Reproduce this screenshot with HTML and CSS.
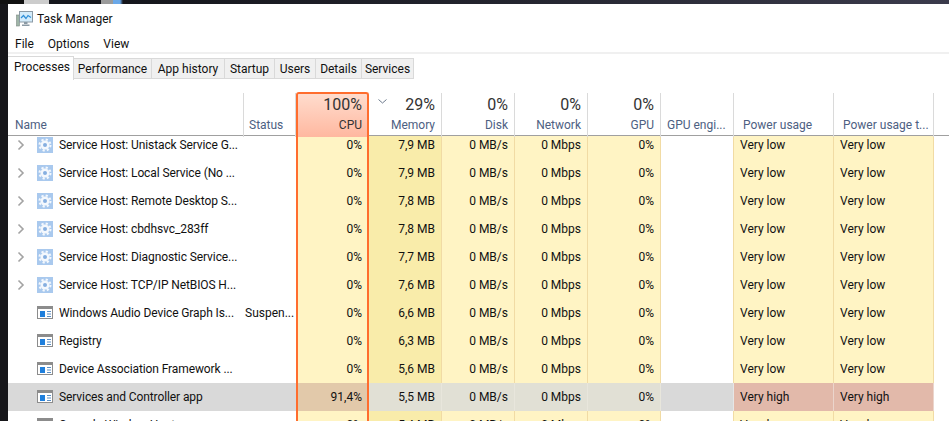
FILE: index.html
```html
<!DOCTYPE html>
<html lang="en">
<head>
    <meta charset="UTF-8">
    <title>Task Manager</title>
    <link rel="stylesheet" href="styles.css">
</head>
<body>
    <svg class="defs" width="0" height="0">
        <symbol id="gear" viewBox="0 0 16 16">
            <rect width="16" height="16" fill="#a9c9ee"/>
            <circle cx="8" cy="8" r="4.500" fill="#f4f8fd"/>
            <circle cx="8" cy="8" r="5.500" fill="none" stroke="#f4f8fd" stroke-width="2" stroke-dasharray="2.200 2.120"/>
            <circle cx="8" cy="8" r="2" fill="#86afe0"/>
        </symbol>
        <symbol id="app" viewBox="0 0 16 16">
            <rect x=".5" y="1.500" width="15" height="12" fill="#fff" stroke="#8c8c8c"/>
            <rect x="1" y="2" width="14" height="2" fill="#8c8c8c"/>
            <rect x="3" y="6" width="5" height="6" fill="#1f7fdc"/>
            <path stroke="#5c8fc4" d="M10 6.500h4M10 9h4M10 11.500h4"/>
        </symbol>
        <symbol id="chev" viewBox="0 0 8 12">
            <path fill="none" stroke="#a3a3a3" stroke-width="1.600" d="M1.500 1.500 6 6l-4.500 4.500"/>
        </symbol>
    </svg>

    <div class="window">
        <div class="titlebar">
            <svg class="app-icon" width="17" height="16" viewBox="0 0 17 16">
                <rect x=".5" y="4" width="3" height="11" fill="#9fb5a8" stroke="#7d8b84" stroke-width=".6"/>
                <rect x="3.500" y=".5" width="13" height="10.500" fill="#d4ecfb" stroke="#8b9aa5"/>
                <path fill="none" stroke="#2f8fd8" stroke-width="1.200" d="M5 7l2.500-2.500L10 7.500l2-3 3 2"/>
                <path fill="#8b9aa5" d="M8 11h3.500v2H8zM6 13.500h7.500V15H6z"/>
            </svg>
            <span>Task Manager</span>
        </div>
        <div class="menubar">
            <span>File</span>
            <span>Options</span>
            <span>View</span>
        </div>
        <div class="tabs">
            <div class="tab tab-active">Processes</div>
            <div class="tab tab-perf">Performance</div>
            <div class="tab tab-hist">App history</div>
            <div class="tab tab-start">Startup</div>
            <div class="tab tab-users">Users</div>
            <div class="tab tab-details">Details</div>
            <div class="tab tab-services">Services</div>
        </div>

        <div class="table">
            <div class="head">
                <div class="hcol hcol-left"><span class="label name-label">Name</span></div>
                <div class="hcol hcol-left hcol-status"><span class="label">Status</span></div>
                <div class="hcol hcol-cpu"><span class="big">100%</span><span class="label">CPU</span></div>
                <div class="hcol hcol-mem">
                    <svg class="sort" width="9" height="5" viewBox="0 0 9 5"><path fill="none" stroke="#6d7a8c" d="M.5.5l4 3.500 4-3.500"/></svg>
                    <span class="big">29%</span><span class="label">Memory</span>
                </div>
                <div class="hcol"><span class="big">0%</span><span class="label">Disk</span></div>
                <div class="hcol"><span class="big">0%</span><span class="label">Network</span></div>
                <div class="hcol"><span class="big">0%</span><span class="label">GPU</span></div>
                <div class="hcol hcol-left"><span class="label">GPU engi...</span></div>
                <div class="hcol hcol-power"><span class="label">Power usage</span></div>
                <div class="hcol hcol-power"><span class="label">Power usage t...</span></div>
                <div class="hcol-end"></div>
            </div>

            <div class="rows">
                <div class="row">
                    <div class="c-name"><svg class="chev"><use href="#chev"/></svg><svg class="ico"><use href="#gear"/></svg>Service Host: Unistack Service G...</div>
                    <div class="c-status"></div><div class="c-cpu">0%</div><div class="c-mem">7,9 MB</div><div class="c-num">0 MB/s</div><div class="c-num">0 Mbps</div><div class="c-num">0%</div><div class="c-eng"></div><div class="c-pow">Very low</div><div class="c-pow">Very low</div>
                </div>
                <div class="row">
                    <div class="c-name"><svg class="chev"><use href="#chev"/></svg><svg class="ico"><use href="#gear"/></svg>Service Host: Local Service (No ...</div>
                    <div class="c-status"></div><div class="c-cpu">0%</div><div class="c-mem">7,9 MB</div><div class="c-num">0 MB/s</div><div class="c-num">0 Mbps</div><div class="c-num">0%</div><div class="c-eng"></div><div class="c-pow">Very low</div><div class="c-pow">Very low</div>
                </div>
                <div class="row">
                    <div class="c-name"><svg class="chev"><use href="#chev"/></svg><svg class="ico"><use href="#gear"/></svg>Service Host: Remote Desktop S...</div>
                    <div class="c-status"></div><div class="c-cpu">0%</div><div class="c-mem">7,8 MB</div><div class="c-num">0 MB/s</div><div class="c-num">0 Mbps</div><div class="c-num">0%</div><div class="c-eng"></div><div class="c-pow">Very low</div><div class="c-pow">Very low</div>
                </div>
                <div class="row">
                    <div class="c-name"><svg class="chev"><use href="#chev"/></svg><svg class="ico"><use href="#gear"/></svg>Service Host: cbdhsvc_283ff</div>
                    <div class="c-status"></div><div class="c-cpu">0%</div><div class="c-mem">7,8 MB</div><div class="c-num">0 MB/s</div><div class="c-num">0 Mbps</div><div class="c-num">0%</div><div class="c-eng"></div><div class="c-pow">Very low</div><div class="c-pow">Very low</div>
                </div>
                <div class="row">
                    <div class="c-name"><svg class="chev"><use href="#chev"/></svg><svg class="ico"><use href="#gear"/></svg>Service Host: Diagnostic Service...</div>
                    <div class="c-status"></div><div class="c-cpu">0%</div><div class="c-mem">7,7 MB</div><div class="c-num">0 MB/s</div><div class="c-num">0 Mbps</div><div class="c-num">0%</div><div class="c-eng"></div><div class="c-pow">Very low</div><div class="c-pow">Very low</div>
                </div>
                <div class="row">
                    <div class="c-name"><svg class="chev"><use href="#chev"/></svg><svg class="ico"><use href="#gear"/></svg>Service Host: TCP/IP NetBIOS H...</div>
                    <div class="c-status"></div><div class="c-cpu">0%</div><div class="c-mem">7,6 MB</div><div class="c-num">0 MB/s</div><div class="c-num">0 Mbps</div><div class="c-num">0%</div><div class="c-eng"></div><div class="c-pow">Very low</div><div class="c-pow">Very low</div>
                </div>
                <div class="row">
                    <div class="c-name c-leaf"><svg class="ico"><use href="#app"/></svg>Windows Audio Device Graph Is...</div>
                    <div class="c-status">Suspen...</div><div class="c-cpu">0%</div><div class="c-mem">6,6 MB</div><div class="c-num">0 MB/s</div><div class="c-num">0 Mbps</div><div class="c-num">0%</div><div class="c-eng"></div><div class="c-pow">Very low</div><div class="c-pow">Very low</div>
                </div>
                <div class="row">
                    <div class="c-name c-leaf"><svg class="ico"><use href="#app"/></svg>Registry</div>
                    <div class="c-status"></div><div class="c-cpu">0%</div><div class="c-mem">6,3 MB</div><div class="c-num">0 MB/s</div><div class="c-num">0 Mbps</div><div class="c-num">0%</div><div class="c-eng"></div><div class="c-pow">Very low</div><div class="c-pow">Very low</div>
                </div>
                <div class="row">
                    <div class="c-name c-leaf"><svg class="ico"><use href="#app"/></svg>Device Association Framework ...</div>
                    <div class="c-status"></div><div class="c-cpu">0%</div><div class="c-mem">5,6 MB</div><div class="c-num">0 MB/s</div><div class="c-num">0 Mbps</div><div class="c-num">0%</div><div class="c-eng"></div><div class="c-pow">Very low</div><div class="c-pow">Very low</div>
                </div>
                <div class="row row-selected">
                    <div class="c-name c-leaf"><svg class="ico"><use href="#app"/></svg>Services and Controller app</div>
                    <div class="c-status"></div><div class="c-cpu">91,4%</div><div class="c-mem">5,5 MB</div><div class="c-num">0 MB/s</div><div class="c-num">0 Mbps</div><div class="c-num">0%</div><div class="c-eng"></div><div class="c-pow">Very high</div><div class="c-pow">Very high</div>
                </div>
                <div class="row">
                    <div class="c-name c-leaf"><svg class="ico"><use href="#app"/></svg>Console Window Host</div>
                    <div class="c-status"></div><div class="c-cpu">0%</div><div class="c-mem">5,4 MB</div><div class="c-num">0 MB/s</div><div class="c-num">0 Mbps</div><div class="c-num">0%</div><div class="c-eng"></div><div class="c-pow">Very low</div><div class="c-pow">Very low</div>
                </div>
            </div>
        </div>
    </div>
</body>
</html>
```

FILE: styles.css
```css
html, body {
    height: 100%;
    margin: 0;
}
body {
    background: linear-gradient(90deg, #111 0, #111 24px, #ccc 24px, #ccc 49px, #15161c 49px, #15161c 101px, #9a9a9a 101px, #9a9a9a 113px, #6aa8e8 113px, #6aa8e8 120px, #15161c 123px, #23242e 500px, #3b3b4c 100%);
    font-family: Roboto, "Liberation Sans", sans-serif;
    font-size: 12px;
    color: #111;
    overflow: hidden;
    padding: 4px 0 0 8px;
    box-sizing: border-box;
}
.defs {
    display: none;
}
.window {
    height: 417px;
    background: white;
    box-shadow: -8px 0 0 #16161a;
    overflow: hidden;
    display: flex;
    flex-direction: column;
}

.titlebar {
    height: 30px;
    padding-left: 8px;
    display: flex;
    align-items: center;
    gap: 4px;
}
.app-icon {
    flex: none;
}
.menubar {
    height: 17px;
    padding: 1px 0 0 7px;
    display: flex;
    align-items: center;
    gap: 14px;
    border-bottom: 2px solid #f0f0f0;
}

.tabs {
    height: 25px;
    display: flex;
    align-items: flex-end;
    box-sizing: border-box;
}
.tab {
    height: 21px;
    margin-bottom: 0;
    box-sizing: border-box;
    background: #f0f0f0;
    border: 1px solid #d9d9d9;
    border-left: none;
    display: flex;
    align-items: center;
    justify-content: center;
}
.tab-active {
    width: 66px;
    height: 24px;
    background: white;
    border-top-color: #d9d9d9;
    border-bottom: none;
    padding: 0 0 3px 3px;
    margin-bottom: -1px;
}
.tab-perf { width: 78px; }
.tab-hist { width: 73px; }
.tab-start { width: 50px; }
.tab-users { width: 41px; }
.tab-details { width: 46px; }
.tab-services { width: 52px; }

.table {
    flex: 1;
    min-height: 0;
    margin-top: 14px;
    display: flex;
    flex-direction: column;
}
.head, .row {
    display: grid;
    grid-template-columns: 236px 52px 73px 73px 73px 73px 73px 73px 100px 100px 1fr;
}
.head {
    height: 43px;
    box-sizing: border-box;
    border-bottom: 1px solid #a0a0a0;
    flex: none;
}
.hcol {
    position: relative;
    display: flex;
    flex-direction: column;
    align-items: flex-end;
    justify-content: flex-end;
    padding: 0 6px 3px;
    border-right: 1px solid #dadada;
}
.hcol-left {
    align-items: flex-start;
}
.hcol-status {
    padding-left: 5px;
}
.hcol-power {
    align-items: flex-start;
    padding-left: 9px;
}
.hcol-end {
    min-width: 0;
}
.name-label {
    margin-left: 1px;
}
.hcol-cpu {
    margin-top: -1px;
    padding-right: 5px;
    background: linear-gradient(#ffdccd, #ffb8a0);
    border: 2px solid #ff6d2e;
    border-bottom: none;
    border-radius: 3px 3px 0 0;
}
.hcol-cpu .label {
    color: #333;
}
.big {
    font-size: 16px;
    line-height: 21px;
    margin-bottom: 1px;
    color: #333;
}
.label {
    line-height: 18px;
    color: #4d6082;
    white-space: nowrap;
}
.sort {
    position: absolute;
    top: 6px;
    left: 9px;
}

.rows {
    flex: 1;
    min-height: 0;
    overflow: hidden;
}
.row {
    height: 28px;
    line-height: 28px;
    white-space: nowrap;
}
.row:first-child {
    margin-top: -5px;
}
.row > div {
    min-width: 0;
    padding-right: 6px;
    text-align: right;
    box-sizing: border-box;
}
.row > .c-name {
    padding-left: 9px;
    display: flex;
    align-items: center;
    text-align: left;
    letter-spacing: -0.1px;
}
.row > .c-leaf {
    padding-left: 29px;
}
.row > .c-status, .row > .c-pow {
    text-align: left;
}
.chev {
    width: 8px;
    height: 12px;
    margin-right: 12px;
    flex: none;
}
.ico {
    width: 16px;
    height: 16px;
    margin-right: 6px;
    flex: none;
}
.row > .c-status {
    padding: 0 0 0 1px;
}
.c-cpu, .c-mem, .c-num, .c-pow {
    background: #fff4c4;
    border-right: 1px solid #f1dba4;
}
.c-cpu {
    border-left: 2px solid #ff6d2e;
    border-right: 2px solid #ff6d2e;
}
.row > .c-cpu {
    padding-right: 5px;
}
.c-mem {
    background: #f9ecaa;
}
.c-eng {
    border-right: 1px solid #f1dba4;
}
.row > .c-pow {
    padding-left: 6px;
}

.row-selected > div {
    background: #d9d9d9;
}
.row-selected > .c-cpu {
    background: #e2c9aa;
}
.row-selected > .c-mem, .row-selected > .c-num {
    background: #e1e0d5;
    border-right-color: #e8e6dc;
}
.row-selected > .c-eng {
    border-right-color: #e6e6e6;
}
.row-selected > .c-pow {
    background: #e2b9aa;
    border-right-color: #ebd5cc;
}
```
